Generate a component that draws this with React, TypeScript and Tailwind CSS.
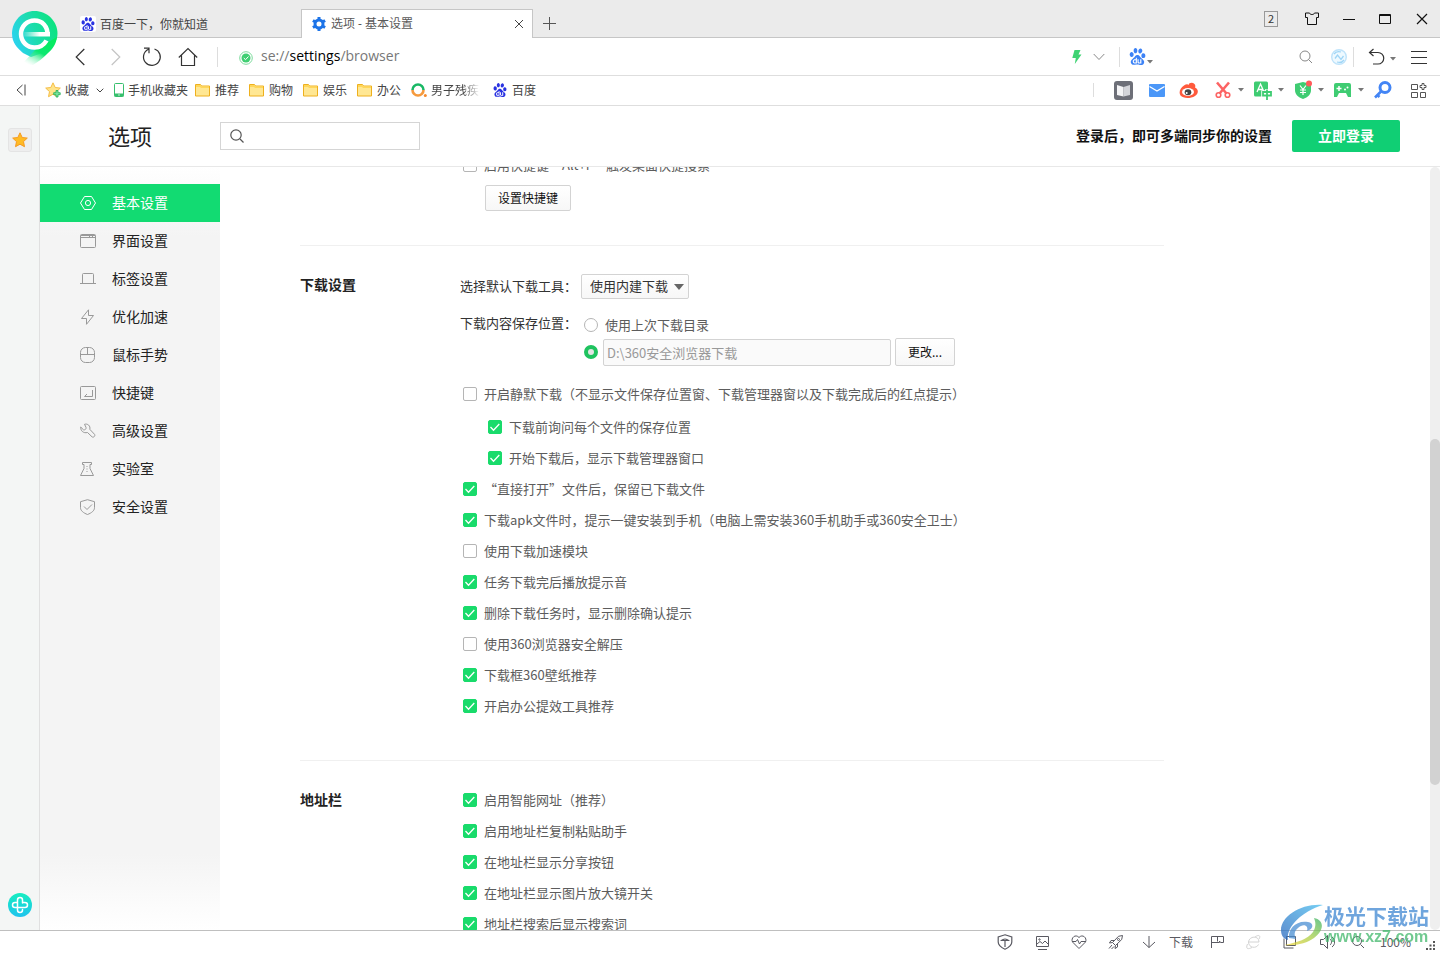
import React, { useState } from "react";
import { SiBaidu } from "react-icons/si";

type IconProps = { children: React.ReactNode; w?: number; h?: number; className?: string; sw?: number };

function Line({ children, w = 16, h = 16, className = "", sw = 1 }: IconProps) {
  return (
    <svg
      width={w}
      height={h}
      viewBox={`0 0 ${w} ${h}`}
      fill="none"
      stroke="currentColor"
      strokeWidth={sw}
      className={`shrink-0 ${className}`}
      aria-hidden="true"
    >
      {children}
    </svg>
  );
}

function Caret({ className = "" }: { className?: string }) {
  return (
    <svg width="6" height="4" viewBox="0 0 6 4" className={`shrink-0 fill-[#777] ${className}`} aria-hidden="true">
      <path d="M0 0h6L3 3.5z" />
    </svg>
  );
}

function BrowserLogo() {
  return (
    <svg width="46" height="56" viewBox="0 0 46 56" className="absolute left-3 top-[10px] z-10" aria-hidden="true">
      <defs>
        <linearGradient id="pin" x1="0" y1="0.7" x2="1" y2="0.3">
          <stop offset="0" stopColor="#2bd2f5" />
          <stop offset="0.5" stopColor="#1cdcae" />
          <stop offset="1" stopColor="#0ae47c" />
        </linearGradient>
        <linearGradient id="tail" x1="0.9" y1="0" x2="0.2" y2="1">
          <stop offset="0" stopColor="#04ec5c" />
          <stop offset="0.55" stopColor="#0ce870" />
          <stop offset="1" stopColor="#a0f8cc" stopOpacity="0" />
        </linearGradient>
        <linearGradient id="bar" x1="0" y1="0" x2="1" y2="0">
          <stop offset="0" stopColor="#fff" stopOpacity="0.1" />
          <stop offset="0.6" stopColor="#fff" />
        </linearGradient>
      </defs>
      <path d="M22.500 1C10 1 0 11 0 23.500c0 9 5 14.500 11 19.500l8 4 14-5c8-5 12.500-11 12.500-18.500C45.500 11 35 1 22.500 1z" fill="url(#pin)" />
      <path d="M45 27c-1 7-4 12-10 17-4 4-9 8-14 11L10 54l14-15z" fill="url(#tail)" />
      <path
        d="M35.500 25.500C36 16 30 10.500 22.500 10.500S9 16.500 9 24s6 13.500 13.500 13.500c5 0 9.500-2.500 12-7"
        fill="none"
        stroke="#fff"
        strokeWidth="4.500"
      />
      <path d="M12 22h26v4.500H12z" fill="url(#bar)" />
    </svg>
  );
}

function Folder() {
  return (
    <svg width="15" height="14" viewBox="0 0 15 14" className="shrink-0" aria-hidden="true">
      <path d="M.5 1.500h5l1 1.500h8v10H.5z" fill="#ffe793" stroke="#eeb01e" />
      <path d="M1 2h4.300l1 1.500H14V5H6L5 4H1z" fill="#ffd75a" />
    </svg>
  );
}

function Star({ plus = false }: { plus?: boolean }) {
  return (
    <svg width="16" height="16" viewBox="0 0 16 16" className="shrink-0" aria-hidden="true">
      <path
        d="M8 .8l2.200 4.700 5.100.6-3.800 3.500 1 5.100L8 12.200l-4.500 2.500 1-5.100L.7 6.100l5.100-.6z"
        fill={plus ? "#ffe48a" : "#ffbb24"}
        stroke={plus ? "#f5bd45" : "#f59a23"}
        strokeWidth="1"
        strokeLinejoin="round"
      />
      {plus && (
        <path d="M11 8.500h2v2.200h2.200v2H13V15h-2v-2.300H8.700v-2H11z" fill="#7be39f" stroke="#21ad55" strokeWidth=".8" />
      )}
    </svg>
  );
}

const folders = ["推荐", "购物", "娱乐", "办公"];

const menu: { name: string; icon: React.ReactNode }[] = [
  { name: "基本设置", icon: <><path d="M4.500 1.500h7L15.500 8l-4 6.500h-7L.5 8z" strokeLinejoin="round" /><circle cx="8" cy="8" r="2.600" /></> },
  { name: "界面设置", icon: <><rect x=".5" y="1.500" width="15" height="13" rx="1" /><path d="M1 2.500h14M1 4.500h14M9.500 2v3M12.500 2v3" /></> },
  { name: "标签设置", icon: <path d="M0 12.500h16M2.500 12.500v-9a1 1 0 011-1h9a1 1 0 011 1v9" /> },
  { name: "优化加速", icon: <path d="M8.500.8L1.500 9.500h5v5.800l7-8.800h-5z" strokeLinejoin="round" /> },
  { name: "鼠标手势", icon: <><rect x=".5" y=".5" width="14" height="15" rx="5" /><path d="M.5 7.500h14M7.500.5v7" /></> },
  { name: "快捷键", icon: <><rect x=".5" y="1.500" width="15" height="13" rx="1" /><path d="M12.500 5v6.500h-8M4.500 11.500L7 9" /></> },
  { name: "高级设置", icon: <path d="M4.500 1.300c3-1 6.200 1.500 5.300 5l4.700 5c1.200 1.500-1 3.700-2.500 2.500L7.500 9.500C3.500 10.500.5 8 .7 4L3.500 6.800c1.500.5 3-1 2.500-2.500z" strokeLinejoin="round" /> },
  { name: "实验室", icon: <><path d="M2.500 1.500h9v2H10v4l3.500 7H.5l3.500-7v-4H2.500z" strokeLinejoin="round" /><path d="M7 5v6" strokeDasharray="1 1.500" /></> },
  { name: "安全设置", icon: <><path d="M7.500.7l7 2v6c0 3-3 5.300-7 6.800-4-1.500-7-3.800-7-6.800v-6z" strokeLinejoin="round" /><path d="M4 7.500l3 3 5-5" /></> },
];

function CheckRow({ text, on = false, sub = false }: { text: string; on?: boolean; sub?: boolean }) {
  const [checked, setChecked] = useState(on);
  return (
    <label className={`flex h-[31px] items-center gap-[7px] ${sub ? "pl-[28px]" : "pl-[3px]"}`}>
      <span className="grid size-[14px] shrink-0">
        <input
          type="checkbox"
          checked={checked}
          onChange={(e) => setChecked(e.target.checked)}
          className="col-start-1 row-start-1 size-[14px] appearance-none rounded-[2px] border border-[#b5b5b5] bg-white checked:border-[#19db6b] checked:bg-[#19db6b]"
        />
        {checked && (
          <svg viewBox="0 0 14 14" className="pointer-events-none col-start-1 row-start-1 size-[14px]" aria-hidden="true">
            <path d="M2.500 7l3 3.200L11.300 4" fill="none" stroke="#fff" strokeWidth="1.300" />
          </svg>
        )}
      </span>
      <span className="whitespace-nowrap">{text}</span>
    </label>
  );
}

function Section({ title, children }: { title: string; children: React.ReactNode }) {
  return (
    <section className="flex border-t border-[#f0f0f0]">
      <h2 className="w-40 shrink-0 pt-7 text-[14px] leading-5 font-bold text-[#222]">{title}</h2>
      <div className="min-w-0 flex-1">{children}</div>
    </section>
  );
}

const plainButton =
  "shrink-0 rounded-[2px] border border-[#d3d3d3] bg-linear-to-b from-white to-[#f7f7f7] text-[12px] text-[#111]";

function TitleBar() {
  return (
    <div className="flex h-[38px] shrink-0 items-stretch bg-[#ebebeb]">
      <div className="flex w-[301px] items-center gap-1 border-b border-[#c6c6c6] pt-[10px] pl-20 text-[12px] text-[#444]">
        <span className="grid size-4 place-items-center rounded-[2px] bg-white">
          <SiBaidu size={14} color="#2932e1" />
        </span>
        百度一下，你就知道
      </div>
      <div className="mt-[9px] flex w-[232px] items-center border border-b-0 border-[#c6c6c6] bg-white pr-2 pl-[10px] text-[12px] text-[#5a5a5a]">
        <svg width="14" height="14" viewBox="0 0 14 14" aria-hidden="true">
          <circle cx="7" cy="7" r="4" fill="none" stroke="#1d74e8" strokeWidth="3" />
          <path d="M7 0v3M7 11v3M.9 3.500l2.600 1.500M10.500 9l2.600 1.500M.9 10.500L3.500 9M10.500 5l2.600-1.500" stroke="#1d74e8" strokeWidth="3" />
        </svg>
        <span className="ml-[5px] flex-1 font-['Noto_Sans','Noto_Sans_CJK_SC',sans-serif]">选项 - 基本设置</span>
        <button aria-label="关闭标签页" className="text-[#444]">
          <Line w={10} h={10}><path d="M1 1l8 8M9 1L1 9" /></Line>
        </button>
      </div>
      <div className="flex flex-1 items-center justify-between border-b border-[#c6c6c6] pl-[10px]">
        <button aria-label="新标签页" className="pt-[9px] text-[#555]">
          <Line w={13} h={13}><path d="M6.500 0v13M0 6.500h13" /></Line>
        </button>
        <div className="flex items-center pr-3 text-[#111]">
          <button className="grid h-4 w-[14px] place-items-center border border-[#999] text-[11px] leading-none text-[#333]">2</button>
          <button aria-label="皮肤" className="ml-[26px]">
            <Line w={16} h={14}>
              <path d="M5.500 1H1.500v4.500h2v7h9v-7h2V1h-4c-.5 2-4.500 2-5 0z" strokeLinejoin="round" />
            </Line>
          </button>
          <button aria-label="最小化" className="ml-[22px]"><Line w={14} h={12}><path d="M1 6.500h12" /></Line></button>
          <button aria-label="最大化" className="ml-[22px]"><Line w={14} h={12}><path d="M1.500 1.500h11v9h-11zM1 2.500h12" /></Line></button>
          <button aria-label="关闭" className="ml-6"><Line w={12} h={12} sw={1.2}><path d="M1 1l10 10M11 1L1 11" /></Line></button>
        </div>
      </div>
    </div>
  );
}

function NavBar() {
  const nav = "grid w-9 place-items-center";
  return (
    <div className="flex h-[38px] shrink-0 items-center border-b border-[#dedede] bg-white pr-[13px] pl-[62px] text-[#333]">
      <button aria-label="后退" className={nav}><Line w={10} h={18} sw={1.2}><path d="M9.300 1L1.200 9l8.100 8" /></Line></button>
      <button aria-label="前进" className={`${nav} text-[#c4c4c4]`}><Line w={10} h={18} sw={1.2}><path d="M.7 1l8.100 8L.7 17" /></Line></button>
      <button aria-label="刷新" className={nav}>
        <Line w={20} h={20} sw={1.2}><path d="M12.500 2a8.400 8.400 0 11-6 .3M2 1.200h5v5" /></Line>
      </button>
      <button aria-label="主页" className={nav}>
        <Line w={20} h={20} sw={1.2}><path d="M.8 10.500L10 1.500l9.200 9M3.500 8.500v10h13v-10" /></Line>
      </button>
      <span className="ml-[11px] h-5 w-px bg-[#ddd]" />
      <svg width="14" height="14" viewBox="0 0 14 14" className="mt-[3px] ml-[21px] shrink-0" aria-hidden="true">
        <circle cx="7" cy="7" r="6.300" fill="#fff" stroke="#7edb9d" />
        <circle cx="7" cy="7" r="4.500" fill="#3fcf72" />
        <path d="M4.800 7l1.700 1.700 3-3.200" fill="none" stroke="#fff" />
      </svg>
      <div className="ml-2 flex-1 pb-[2px] font-['Open_Sans','Noto_Sans_CJK_SC',sans-serif] text-[14px] leading-5 text-[#777]">
        se://<span className="text-black">settings</span>/browser
      </div>
      <button aria-label="极速模式" className="grid w-[22px] place-items-center">
        <svg width="10" height="14" viewBox="0 0 10 14" aria-hidden="true"><path d="M2.500 0h6L6.500 4.500h3L2.800 14l1-6H.3z" fill="#3fd373" /></svg>
      </button>
      <button aria-label="展开" className="grid w-[22px] place-items-center text-[#888]"><Line w={12} h={8}><path d="M.7 1l5.300 5.500L11.300 1" /></Line></button>
      <span className="ml-[9px] h-5 w-px bg-[#ddd]" />
      <button aria-label="选择搜索引擎" className="ml-[9px] flex items-end">
        <SiBaidu size={17} color="#3c82f6" />
        <Caret className="ml-px mb-[1px]" />
      </button>
      <input aria-label="搜索" className="w-[146px] bg-transparent px-1 text-[13px] outline-none" />
      <button aria-label="开始搜索" className="text-[#888]"><Line w={14} h={14}><circle cx="6" cy="6" r="5" /><path d="M9.500 9.500L13 13" /></Line></button>
      <button aria-label="智能服务" className="ml-[17px]">
        <svg width="18" height="18" viewBox="0 0 18 18" aria-hidden="true">
          <circle cx="9" cy="9" r="7.300" fill="#eef9ff" stroke="#bfe3fa" strokeWidth="1.400" />
          <path d="M5 10.500l2.500-3.500 3.500 4.500 2.500-3.500M4 6c1.500-2 4-3 7-2M14 12c-1.500 2-4 3-7 2" fill="none" stroke="#9ed5f6" strokeWidth="1.300" />
        </svg>
      </button>
      <span className="ml-[5px] h-5 w-px bg-[#ddd]" />
      <button aria-label="恢复标签页" className="ml-[14px] flex items-center">
        <Line w={17} h={18} sw={1.2}><path d="M5.500 1L1.500 4.500l4 3.500M1.500 4.500H10a5.700 5.700 0 010 11.500H5" /></Line>
        <Caret className="mt-1 ml-[5px]" />
      </button>
      <button aria-label="菜单" className="ml-[15px]"><Line w={16} h={14}><path d="M0 1.500h16M0 7.500h16M0 13.500h16" /></Line></button>
    </div>
  );
}

function Tool({ label, children }: { label: string; children: React.ReactNode }) {
  return (
    <button aria-label={label} className="flex w-10 items-center">
      <svg width="20" height="20" viewBox="0 0 20 20" className="shrink-0" aria-hidden="true">{children}</svg>
      <Caret className="ml-[5px]" />
    </button>
  );
}

function BookmarkBar() {
  return (
    <div className="flex h-[30px] shrink-0 items-center border-b border-[#dedede] bg-white pr-3 pb-px pl-4 text-[12px] text-[#444]">
      <button aria-label="收起" className="mr-[19px]"><Line w={10} h={12}><path d="M6.500 1L1 6l5.500 5M9 .5v11" /></Line></button>
      <button className="flex items-center gap-1">
        <Star plus />收藏
        <Line w={8} h={5} className="ml-[3px]"><path d="M.7.7L4 4 7.300.7" /></Line>
      </button>
      <a href="#phone" className="ml-[9px] flex items-center gap-[3px]">
        <svg width="12" height="14" viewBox="0 0 12 14" aria-hidden="true">
          <rect x="1.500" y=".5" width="9" height="13" rx="1" fill="#fff" stroke="#37bf6d" />
          <path d="M1.500 10.500h9v3h-9z" fill="#37bf6d" /><circle cx="6" cy="12" r=".7" fill="#fff" />
        </svg>
        手机收藏夹
      </a>
      <div className="ml-[7px] flex gap-[10px]">
        {folders.map((f) => (
          <a key={f} href="#folder" className="flex items-center gap-[5px]"><Folder />{f}</a>
        ))}
      </div>
      <a href="#so" className="ml-[10px] flex items-center gap-1">
        <svg width="16" height="16" viewBox="0 0 16 16" className="shrink-0" aria-hidden="true">
          <path d="M1.500 8a5.500 5.500 0 0111 0" fill="none" stroke="#19b865" strokeWidth="2.600" />
          <path d="M12.500 8a5.500 5.500 0 01-11 0" fill="none" stroke="#f59a3e" strokeWidth="2.600" />
          <circle cx="14.300" cy="13.500" r="1.500" fill="#f58a2e" />
        </svg>
        <span className="w-[49px] overflow-hidden whitespace-nowrap [mask-image:linear-gradient(to_right,black_65%,transparent)]">男子残疾侄</span>
      </a>
      <a href="#baidu" className="ml-[13px] flex items-center gap-[5px]"><SiBaidu size={14} color="#2932e1" />百度</a>
      <div className="flex flex-1 items-center justify-end">
        <span className="mr-[19px] h-[14px] w-px bg-[#ddd]" />
        <button aria-label="阅读">
          <svg width="20" height="20" viewBox="0 0 20 20" aria-hidden="true">
            <rect x="1" y="1" width="19" height="19" rx="3" fill="#6d6f78" />
            <path d="M4 5l6.500 2v9.500L4 15z" fill="#f4f4f6" /><path d="M17 5l-6.500 2v9.500L17 15z" fill="#d4d5da" />
          </svg>
        </button>
        <button aria-label="邮件" className="ml-[14px]">
          <svg width="20" height="20" viewBox="0 0 20 20" aria-hidden="true">
            <rect x="2" y="4" width="16" height="13" rx="1" fill="#4b97f8" /><path d="M2.500 6.500L10 11l7.500-4.500" fill="none" stroke="#fff" strokeWidth="1.300" />
          </svg>
        </button>
        <button aria-label="微博" className="ml-3">
          <svg width="20" height="20" viewBox="0 0 20 20" aria-hidden="true">
            <path d="M5 5.500c2-1.500 4-1.500 4.500-.5C10 2.500 13.500 2 15.500 4c1 1 1 2.500.5 3.500 4 2 3.500 6 0 8.500-5 3-12 2.500-14.500-.5C-.5 12.500 1 8 5 5.500z" fill="#ff5a3c" />
            <ellipse cx="9" cy="12" rx="6" ry="3.900" fill="#fff" /><ellipse cx="9" cy="12.200" rx="3.300" ry="3" fill="#444" />
            <circle cx="7.700" cy="13" r="1" fill="#fff" />
          </svg>
        </button>
        <div className="ml-[14px] flex">
          <Tool label="截图">
            <path d="M4 2.500l9.500 11M16 2.500l-9.500 11" stroke="#fc6464" strokeWidth="2.600" />
            <circle cx="5.500" cy="15" r="2.300" fill="none" stroke="#fc6464" strokeWidth="1.600" /><circle cx="14.500" cy="15" r="2.300" fill="none" stroke="#fc6464" strokeWidth="1.600" />
          </Tool>
          <Tool label="翻译">
            <rect x="1" y="1.500" width="14" height="15" rx="1.500" fill="#3fcc72" />
            <path d="M4 12L7.500 4 11 12M5.300 9.500h4.500" fill="none" stroke="#fff" strokeWidth="1.300" />
            <path d="M14 9v10.500M10 12h8.500v4H10z" fill="#fff" stroke="#fff" strokeWidth="3.500" />
            <path d="M10 12h8v3.500h-8zM14 9.500V20" fill="none" stroke="#3fcc72" strokeWidth="1.800" />
          </Tool>
          <Tool label="网购">
            <path d="M10 2l8 2v6c0 4.500-3 7-8 9-5-2-8-4.500-8-9V4z" fill="#3fcc72" />
            <path d="M7 5.500L10 9.500l3-4M10 9.500v5.500M7 10h6M7 12.500h6" stroke="#fff" strokeWidth="1.200" fill="none" />
            <circle cx="16" cy="3.500" r="3" fill="#ff5a5a" />
          </Tool>
          <Tool label="游戏">
            <path d="M3 3h13a2 2 0 012 2v12h-3l-2-4H6l-2 4H1V5a2 2 0 012-2z" fill="#3fcc72" />
            <path d="M6 6v5M3.500 8.500h5" stroke="#fff" strokeWidth="1.500" /><circle cx="14.500" cy="7.500" r="1" fill="#fff" /><circle cx="12" cy="9.500" r="1" fill="#fff" />
          </Tool>
        </div>
        <button aria-label="登录管家">
          <svg width="20" height="20" viewBox="0 0 20 20" fill="none" stroke="#4385f5" aria-hidden="true">
            <circle cx="12" cy="7.500" r="5" strokeWidth="3" /><path d="M8.500 11L2 17.500M4 14.500l2.500 2.500" strokeWidth="2.600" />
          </svg>
        </button>
        <button aria-label="扩展" className="ml-[15px] text-[#555]">
          <Line w={20} h={20}><path d="M3.500 4.500h6v5h-6zM3.500 12.500h6v5h-6zM12.500 12.500h5v5h-5z" /><path d="M14 3.500h2v2h2v2h-2v2h-2v-2h-2v-2h2z" /></Line>
        </button>
      </div>
    </div>
  );
}

function StatusBar() {
  const cell = "grid w-[37px] place-items-center";
  return (
    <footer className="flex h-[23px] shrink-0 items-center justify-end bg-white pb-[2px] text-[12px] text-[#5a5a62]">
      <button aria-label="安全" className={cell}>
        <Line sw={1.2}><path d="M8 .8l6.800 2.200v5c0 3.500-3 5.500-6.800 7.200C4.200 13.500 1.200 11.500 1.200 8V3z" /><path d="M4.500 6.500c2-2 5-2 7 0zM8 6v7" /></Line>
      </button>
      <button aria-label="图片" className={cell}>
        <Line><path d="M2.500 2.500h12v10h-12zM4 15.500h9M3 10l3-2.500 2.500 2 2.500-2.500 3 3" /><circle cx="5.500" cy="5.500" r=".7" /></Line>
      </button>
      <button aria-label="健康" className={cell}>
        <Line><path d="M8 14.500L1.500 8C-.5 4 4.500-.5 8 3.500c3.500-4 8.500.5 6.500 4.500zM1 7.500h4l1.500-2 2 4.500L10 7.500h5" /></Line>
      </button>
      <button aria-label="加速" className={cell}>
        <Line><path d="M14.500 1.500l-4 .8-6 6.200 3 3 6.200-6zM6 6.500H3l-1.500 2.500L4.500 8.500M9.500 10v3l-2.500 1.500.5-3M4 11l-3 3.500M6 12.500L3.500 15" /><circle cx="10.500" cy="5.500" r="1" /></Line>
      </button>
      <button className="flex items-center gap-[13px] pl-[7px]">
        <Line w={14} h={14}><path d="M7 1v11.500M1 7l6 5.500L13 7" /></Line>下载
      </button>
      <button aria-label="标记" className="ml-[6px] grid w-9 place-items-center"><Line><path d="M2.500 14V2.500h12v6h-3l-1-1.500v1.500h-8M8.500 2.500v5" /></Line></button>
      <button aria-label="兼容模式" className="grid w-9 place-items-center text-[#d4d4d4]"><Line><path d="M3 8h11c0-7-10-6-10.500 0 0 6 8 7 10 2.500M2.500 10C0 16 4 15 7 13.500M10 3c4-3 6-1 4 2" /></Line></button>
      <button aria-label="窗口" className={cell}><Line><path d="M4.500 2.500h9v9h-9zM2 4.500v9.500h9.500" /></Line></button>
      <button aria-label="声音" className={cell}><Line><path d="M1.500 5.500h3l4-4v13l-4-4h-3zM11 5c2 1.500 2 4.500 0 6M13 3c3.500 2.500 3.500 7.500 0 10" /></Line></button>
      <button className="flex items-center gap-[14px] pl-[6px]">
        <Line w={14} h={14}><circle cx="6" cy="6" r="4.500" /><path d="M9.500 9.500L13 13" /></Line>
        <span className="w-[33px] text-[12px]">100%</span>
      </button>
      <svg width="10" height="10" viewBox="0 0 10 10" className="mt-2 mr-1 ml-[14px] fill-[#555]" aria-hidden="true">
        <path d="M7 0h2v2H7zM7 3.500h2v2H7zM3.500 3.500h2v2h-2zM0 7h2v2H0zM3.500 7h2v2h-2zM7 7h2v2H7z" />
      </svg>
    </footer>
  );
}

function Watermark() {
  return (
    <div className="pointer-events-none absolute right-[10px] bottom-[6px] z-20 flex items-end opacity-75">
      <svg width="44" height="44" viewBox="0 0 44 44" aria-hidden="true">
        <defs>
          <linearGradient id="swooshBlue" x1="0" y1="1" x2="1" y2="0"><stop offset="0" stopColor="#2765bd" /><stop offset="1" stopColor="#48bef0" /></linearGradient>
          <linearGradient id="swooshGreen" x1="0" y1="1" x2="1" y2="0"><stop offset="0" stopColor="#f3d33a" /><stop offset=".5" stopColor="#a9cf45" /><stop offset="1" stopColor="#35b36a" /></linearGradient>
        </defs>
        <path d="M43 1C22-1 1 12 1 26c0 6 3 9 7 10C6 24 20 8 43 1z" fill="url(#swooshBlue)" />
        <path d="M9 34c-1-9 7-18 19-16 6 1 6 7-1 9 2-6-4-8-9-3-4 3-4 7-2 11z" fill="#4a8fd4" />
        <path d="M34 14c11 2 10 13 0 20-7 5-17 8-30 7 12-2 24-6 29-13 3-5 3-9 1-14z" fill="url(#swooshGreen)" />
      </svg>
      <div className="w-[106px] pb-px whitespace-nowrap font-bold">
        <div className="text-[21px] leading-6 text-[#3f87d2]">极光下载站</div>
        <div className="font-['Liberation_Sans',sans-serif] text-[16px] leading-5 text-[#42b86b]">www.xz7.com</div>
      </div>
    </div>
  );
}

export default function App() {
  const [active, setActive] = useState("基本设置");
  return (
    <div className="relative flex h-screen flex-col overflow-hidden bg-white font-['Noto_Sans_CJK_SC',sans-serif]">
      <BrowserLogo />
      <TitleBar />
      <NavBar />
      <BookmarkBar />
      <div className="flex min-h-0 flex-1 border-b border-[#bfbfbf]">
        <aside className="flex w-10 shrink-0 flex-col items-center justify-between border-r border-[#e0e0e0] bg-[#f4f6f5] pt-[22px] pb-[13px]">
          <button aria-label="收藏" className="grid size-6 place-items-center rounded-[3px] border border-[#e4e4e4] bg-[#eee]"><Star /></button>
          <button aria-label="添加">
            <svg width="24" height="24" viewBox="0 0 24 24" aria-hidden="true">
              <defs><linearGradient id="plus" x1="0" y1="0" x2="0" y2="1"><stop offset="0" stopColor="#16eec0" /><stop offset="1" stopColor="#1fc3ee" /></linearGradient></defs>
              <circle cx="12" cy="12" r="12" fill="url(#plus)" />
              <path d="M14.500 10V7a2.500 2.500 0 00-5 0v10a2.500 2.500 0 005 0v-.5M9.500 9.500H7a2.500 2.500 0 000 5h10a2.500 2.500 0 000-5h-2.500" fill="none" stroke="#fff" strokeWidth="1.500" strokeLinecap="round" />
            </svg>
          </button>
        </aside>
        <div className="flex min-w-0 flex-1 flex-col">
          <header className="flex h-[61px] shrink-0 items-center border-b border-[#e8e8e8] pr-10">
            <h1 className="w-[180px] pb-[2px] pl-[68px] text-[22px] leading-8 text-[#222]">选项</h1>
            <label className="flex h-7 w-[200px] items-center gap-2 border border-[#d5d5d5] pl-[9px] text-[#555]">
              <Line w={14} h={14} sw={1.2}><circle cx="6" cy="6" r="5.200" /><path d="M10 10l3.500 3.500" /></Line>
              <input aria-label="搜索设置" className="min-w-0 flex-1 text-[13px] outline-none" />
            </label>
            <p className="ml-auto pb-[2px] text-[14px] font-bold text-[#111]">登录后，即可多端同步你的设置</p>
            <button className="ml-5 h-8 w-[108px] rounded-[2px] bg-[#10cf74] pb-[2px] text-[14px] font-bold text-white">立即登录</button>
          </header>
          <div className="flex min-h-0 flex-1">
            <nav className="w-[180px] shrink-0 bg-[linear-gradient(to_bottom,#fff,#f4f4f4_9%,#f4f4f4_90%,#fff)] pt-[17px]">
              {menu.map((m) => (
                <button
                  key={m.name}
                  onClick={() => setActive(m.name)}
                  className={`flex h-[38px] w-full items-center gap-4 pl-10 text-[14px] ${active === m.name ? "bg-[#12db72] text-white" : "text-[#222]"}`}
                >
                  <Line className={active === m.name ? "text-white" : "text-[#999]"}>{m.icon}</Line>
                  <span className="pb-[2px]">{m.name}</span>
                </button>
              ))}
            </nav>
            <main className="min-w-0 flex-1 overflow-hidden px-20 text-[13px] text-[#5c5c5c]">
              <div className="-mt-[18px] max-w-[864px]">
                <div className="h-24 pl-40">
                  <CheckRow text="启用快捷键“Alt+F”触发桌面快捷搜索" />
                  <button className={`mt-[5px] ml-[25px] h-[26px] w-[86px] ${plainButton}`}>设置快捷键</button>
                </div>
                <Section title="下载设置">
                  <div className="flex items-start pt-7 text-[#333]">
                    <label htmlFor="tool" className="w-[121px] leading-6">选择默认下载工具：</label>
                    <div className="grid items-center">
                      <select id="tool" className="col-start-1 row-start-1 h-[25px] w-[108px] appearance-none rounded-[2px] border border-[#d3d3d3] bg-linear-to-b from-white to-[#f7f7f7] pb-px pl-2 text-[13px] text-[#333]">
                        <option>使用内建下载</option>
                      </select>
                      <svg width="10" height="6" viewBox="0 0 10 6" className="pointer-events-none col-start-1 row-start-1 mr-[5px] justify-self-end fill-[#666]" aria-hidden="true"><path d="M0 0h10L5 6z" /></svg>
                    </div>
                  </div>
                  <div className="mt-[14px] flex">
                    <span className="w-[124px] shrink-0 leading-5 text-[#333]">下载内容保存位置：</span>
                    <div>
                      <label className="flex h-6 items-center gap-[7px]">
                        <input type="radio" name="dir" className="size-[14px] appearance-none rounded-full border border-[#b5b5b5] bg-white checked:border-[4px] checked:border-[#1fc35f]" />
                        使用上次下载目录
                      </label>
                      <div className="mt-px flex h-7 items-center">
                        <input type="radio" name="dir" defaultChecked aria-label="使用指定目录" className="size-[14px] appearance-none rounded-full border border-[#b5b5b5] bg-[#e4e4e4] checked:border-[4px] checked:border-[#1fc35f]" />
                        <input aria-label="下载目录" disabled defaultValue="D:\360安全浏览器下载" className="ml-[5px] h-[27px] w-[288px] rounded-[2px] border border-[#d3d3d3] bg-[#fafafa] px-[3px] text-[13px] text-[#999]" />
                        <button className={`ml-1 h-7 w-[60px] ${plainButton}`}>更改...</button>
                      </div>
                    </div>
                  </div>
                  <div className="pt-3 pb-[39px]">
                    <CheckRow text="开启静默下载（不显示文件保存位置窗、下载管理器窗以及下载完成后的红点提示）" />
                    <div className="pt-[2px]">
                      <CheckRow on sub text="下载前询问每个文件的保存位置" />
                      <CheckRow on sub text="开始下载后，显示下载管理器窗口" />
                    </div>
                    <CheckRow on text="“直接打开”文件后，保留已下载文件" />
                    <CheckRow on text="下载apk文件时，提示一键安装到手机（电脑上需安装360手机助手或360安全卫士）" />
                    <CheckRow text="使用下载加速模块" />
                    <CheckRow on text="任务下载完后播放提示音" />
                    <CheckRow on text="删除下载任务时，显示删除确认提示" />
                    <CheckRow text="使用360浏览器安全解压" />
                    <CheckRow on text="下载框360壁纸推荐" />
                    <CheckRow on text="开启办公提效工具推荐" />
                  </div>
                </Section>
                <Section title="地址栏">
                  <div className="pt-[23px]">
                    <CheckRow on text="启用智能网址（推荐）" />
                    <CheckRow on text="启用地址栏复制粘贴助手" />
                    <CheckRow on text="在地址栏显示分享按钮" />
                    <CheckRow on text="在地址栏显示图片放大镜开关" />
                    <CheckRow on text="地址栏搜索后显示搜索词" />
                  </div>
                </Section>
              </div>
            </main>
            <div className="grid w-[10px] shrink-0 grid-rows-[272fr_346fr_145fr] rounded-[5px] bg-[#efefef]">
              <div className="row-start-2 rounded-[5px] bg-[#d2d2d2]" />
            </div>
          </div>
        </div>
      </div>
      <StatusBar />
      <Watermark />
    </div>
  );
}
